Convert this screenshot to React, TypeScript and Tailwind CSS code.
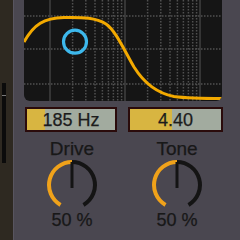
import React from 'react';

// log-scale grid positions inside the graph (graph x = page x - 24)
const decades = [26, 101, 176];
const minorSteps = [22.6, 35.8, 45, 52.4, 58.4, 63.4, 67.7, 71.6];

const minorLines = [-75, ...decades]
  .flatMap((d) => minorSteps.map((s) => d + s))
  .filter((x) => x > 0 && x < 197);

const FilterGraph = () => (
  <div className="w-[198px] h-[101px] bg-[#151515] rounded-b-[6px] overflow-hidden">
    <svg width="198" height="101" viewBox="0 0 198 101">
      {minorLines.map((x) => (
        <line key={x} x1={x} y1={0} x2={x} y2={101} stroke="#505050" strokeWidth="1.5" strokeDasharray="1.5 1.5" />
      ))}
      {decades.map((x) => (
        <line key={x} x1={x} y1={0} x2={x} y2={101} stroke="#404040" strokeWidth="1.5" />
      ))}
      {[16, 49, 84].map((y) => (
        <line key={y} x1={0} y1={y} x2={198} y2={y} stroke="#505050" strokeWidth="1.5" strokeDasharray="1.5 1.5" />
      ))}
      <path
        d="M0,42 C10,24 20,18 40,17.5 C60,17 72,18 82,24 C92,31 100,50 110,67 C120,83 132,93 150,96.5 C165,98.5 180,98.5 198,98.5"
        fill="none"
        stroke="#f2a900"
        strokeWidth="3"
      />
      <circle cx="51" cy="41.7" r="11.5" fill="none" stroke="#3db8ec" strokeWidth="3.2" />
    </svg>
  </div>
);

type ValueBoxProps = { value: string; widthClass: string; fillClass: string };

const ValueBox = ({ value, widthClass, fillClass }: ValueBoxProps) => (
  <div
    className={`${widthClass} ${fillClass} h-[25px] border-[2px] border-[#2a0b0b] flex items-center justify-center text-[18px] leading-none text-[#1c1c1c] [-webkit-text-stroke:0.25px_#1c1c1c]`}
  >
    {value}
  </div>
);

const Knob = ({ label }: { label: string }) => (
  <div className="flex flex-col items-center text-[#181818] [-webkit-text-stroke:0.25px_#181818]">
    <span className="text-[19px] leading-[18px]">{label}</span>
    <svg width="52" height="52" viewBox="0 0 52 52" className="mt-[1px]">
      <path d="M14.5,45.9 A23,23 0 0 1 26,3" fill="none" stroke="#f0a21a" strokeWidth="4" />
      <path d="M26,3 A23,23 0 0 1 37.5,45.9" fill="none" stroke="#141414" strokeWidth="4" />
      <line x1="26" y1="3" x2="26" y2="29" stroke="#141414" strokeWidth="3" />
    </svg>
    <span className="text-[18px] leading-[18px]">50 %</span>
  </div>
);

export default function App() {
  return (
    <div className="w-[240px] h-[240px] flex overflow-hidden font-['Liberation_Sans',Arial,sans-serif]">
      {/* side strip with meter */}
      <div className="w-[13px] h-full bg-[#2e2921] flex flex-col pt-[83px] pl-[2px]">
        <div className="w-[4px] h-[80px] bg-[#0b0b0b] flex flex-col pt-[12px]">
          <div className="w-[4px] h-[1px] bg-[#7a7a7a]" />
        </div>
      </div>

      {/* device panel */}
      <div className="flex-1 h-full bg-[#4a4750] border-l border-[#58555f] flex flex-col pl-[10px]">
        <FilterGraph />

        <div className="flex gap-[11px] mt-[6px] ml-[1px]">
          <ValueBox
            value="185 Hz"
            widthClass="w-[92px]"
            fillClass="bg-[linear-gradient(to_right,#d8b541_18px,#a2ab9f_18px)]"
          />
          <ValueBox
            value="4.40"
            widthClass="w-[95px]"
            fillClass="bg-[linear-gradient(to_right,#d8b541_42px,#a2ab9f_42px)]"
          />
        </div>

        <div className="flex mt-[8px] ml-[1px]">
          <div className="w-[94px] flex justify-center">
            <Knob label="Drive" />
          </div>
          <div className="w-[9px]" />
          <div className="w-[98px] flex justify-center">
            <Knob label="Tone" />
          </div>
        </div>
      </div>
    </div>
  );
}
